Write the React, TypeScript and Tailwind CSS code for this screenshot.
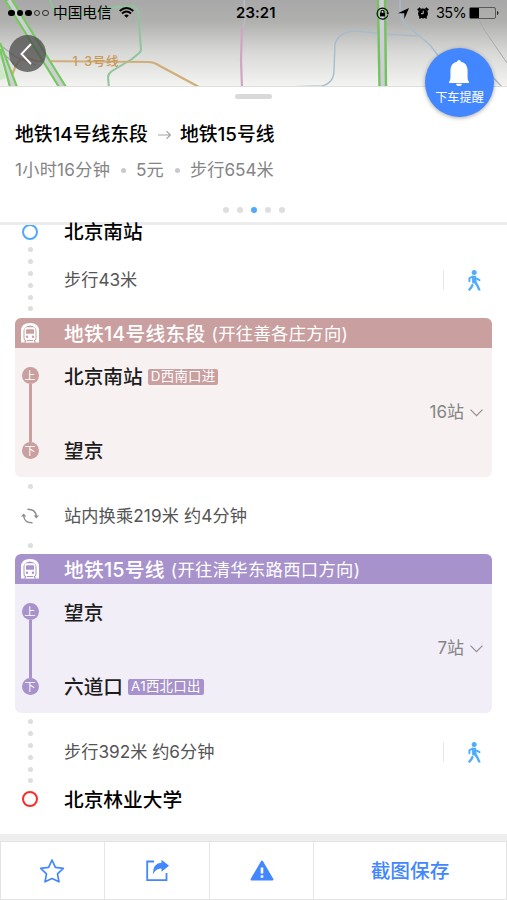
import React from 'react';
import { clsx } from 'clsx';

interface Leg {
  line: string;
  direction: string;
  from: string;
  to: string;
  entrance?: string;
  exit?: string;
  stops: number;
  theme: 'rose' | 'violet';
}

const LEGS: Leg[] = [
  { line: '地铁14号线东段', direction: '(开往善各庄方向)', from: '北京南站', to: '望京', entrance: 'D西南口进', stops: 16, theme: 'rose' },
  { line: '地铁15号线', direction: '(开往清华东路西口方向)', from: '望京', to: '六道口', exit: 'A1西北口出', stops: 7, theme: 'violet' },
];

const THEMES = {
  rose: { solid: 'bg-[#c99f9f]', soft: 'bg-[#f7f1f1]', fill: '#c99f9f' },
  violet: { solid: 'bg-[#a892cb]', soft: 'bg-[#f1eef7]', fill: '#a892cb' },
};

const MapBackdrop = () => (
  <svg className="absolute inset-0" width="507" height="87" viewBox="0 0 507 87" fill="none">
    <defs>
      <linearGradient id="shade" x1="0" y1="0" x2="0" y2="1">
        <stop offset="0" stopColor="#a8a8a8" />
        <stop offset="0.25" stopColor="#b0b0af" />
        <stop offset="0.6" stopColor="#d8d8d6" />
        <stop offset="1" stopColor="#f4f4f2" />
      </linearGradient>
    </defs>
    <rect width="507" height="87" fill="url(#shade)" />
    <path d="M0 60l6 18-6 2z" fill="#cfe8c8" />
    <path d="M0 45l16 12 20 8M0 50l14 14M6 60l9 27" stroke="#a9a4ab" strokeWidth="1.2" />
    <path d="M50 0l3 7q2 7 9 8h16q6 0 13-3l27-5 12-1q6 0 8 5l3 38q0 3-3 5l-6 5-20 12q-4 3-4 6l1 11" stroke="#8fc59a" strokeWidth="2" />
    <path d="M12 75l4-10q4-7 12-7l8 3 112 1q6 0 12 4l39 21" stroke="#cfae7a" strokeWidth="2.2" />
    <path d="M244 0l1 20-3 12" stroke="#b9bcc4" strokeWidth="1.5" />
    <path d="M242 28l-1 32 1 27" stroke="#cfa5c4" strokeWidth="2.2" />
    <path d="M284 87l38-1q12-3 12-16l1-26q4-13 22-13l28 3 33 2M400 0v12q1 9 10 16l20 17 10 13M488 72l14 15" stroke="#a6bccd" strokeWidth="1.4" />
    <path d="M470 0l13 28 24 35" stroke="#a9a9b0" strokeWidth="1" />
    <path d="M9 0l54 87M0 48l14 39" stroke="#cfced8" strokeWidth="6" />
    <path d="M5 0l54 87M12 0l54 87M0 49l10 38M0 43l17 44" stroke="#74cb5c" strokeWidth="2.2" />
    <path d="M381.500 0l2 87" stroke="#cfced8" strokeWidth="6" />
    <path d="M378 0l1.500 87M385 0l1 87" stroke="#72c25e" strokeWidth="2.400" />
    <text x="72.500" y="65.500" fontSize="12.500" fill="#c8995a" wordSpacing="2" fontWeight="500" textLength="46">1 3号线</text>
    <path d="M0 86.500h507" stroke="#dededd" />
  </svg>
);

const Wifi = () => (
  <svg width="15" height="11" viewBox="0 0 15 11" fill="none" stroke="#000" strokeWidth="1.900">
    <path d="M.7 4q6.800-6 13.600 0M3 6.500q4.500-4 9 0" />
    <path d="M7.500 10.800L5.200 8.400q2.300-1.900 4.600 0z" fill="#000" stroke="none" />
  </svg>
);

const StatusBar = () => (
  <div className="relative flex h-[26px] items-center text-black">
    <div className="flex w-[236px] items-center pl-2">
      <div className="flex gap-[2px]">
        {[true, true, true, false, false].map((on, i) => (
          <span key={i} className={clsx('h-[6.600px] w-[6.600px] rounded-full border-[0.800px] border-black/70', on && 'bg-black')} />
        ))}
      </div>
      <span className="ml-[4px] w-[66px] pt-px text-[14.700px] leading-none">中国电信</span>
      <Wifi />
    </div>
    <span className="w-[140px] text-[14.900px] font-semibold tracking-[0.100px]">23:21</span>
    <svg width="13" height="13" viewBox="0 0 13 13" fill="none" stroke="#000" strokeWidth="1.100">
      <path d="M11.800 8.300a5.500 5.500 0 1 1 .2-2.500" />
      <path d="M10.300 5.700h2.700l-1 2z" fill="#000" stroke="none" />
      <rect x="4" y="5.800" width="5" height="3.600" fill="#000" stroke="none" />
      <path d="M5 6V4.700a1.500 1.500 0 0 1 3 0V6" />
    </svg>
    <svg className="ml-[9px]" width="11" height="11" viewBox="0 0 11 11">
      <path d="M11 0L6.300 11V5.200H0z" />
    </svg>
    <svg className="ml-[8px]" width="12" height="12" viewBox="0 0 12 12">
      <circle cx="6" cy="6.500" r="4.900" />
      <path d="M.8 3.200L3.300.9M11.200 3.200L8.700.9" stroke="#000" strokeWidth="2" />
      <path d="M2.500 11.500l1-1.500M9.500 11.500L8.500 10" stroke="#000" strokeWidth="1.500" />
      <path d="M6.200 3.700v3H4" stroke="#c4c4c4" fill="none" />
    </svg>
    <span className="ml-[7px] w-[33px] whitespace-nowrap text-[14.500px] tracking-[-0.600px]">35%</span>
    <svg width="30" height="12" viewBox="0 0 30 12" fill="none">
      <rect x=".5" y=".5" width="26" height="11" rx="1.500" stroke="#444" strokeWidth=".8" />
      <rect x="1" y="1" width="9" height="10" fill="#000" />
      <path d="M28 4q1.500.5 1.500 2T28 8z" fill="#222" />
    </svg>
  </div>
);

const AlightReminder = () => (
  <button className="absolute left-[425px] top-[48px] z-10 flex h-[69px] w-[69px] flex-col items-center rounded-full bg-[#4287ff] pt-[12px] shadow-[0_1px_4px_rgba(0,0,0,0.350)]">
    <svg className="mr-px" width="20" height="26" viewBox="0 0 21 26" preserveAspectRatio="none" fill="#fff">
      <path d="M10.500 0a2 2 0 0 1 2 1.700Q19.300 3.300 19.500 10v8q.1 2.500 1.500 4v1H0v-1q1.400-1.500 1.500-4v-8Q1.700 3.300 8.500 1.700A2 2 0 0 1 10.500 0zM7.500 23.800h6a3 2.200 0 0 1-6 0z" />
    </svg>
    <span className="mt-[5px] text-[12.200px] leading-[14px] text-white">下车提醒</span>
  </button>
);

const Summary = () => (
  <section className="relative flex h-[138px] flex-col border-b-[3px] border-[#ececec] bg-white">
    <div className="mx-auto mt-[7px] h-[5px] w-[37px] rounded-full bg-[#d9d9d9]" />
    <h1 className="mt-[25px] flex h-[22px] items-center pl-[15px] text-[18.800px] font-medium text-black">
      <span className="w-[143px] whitespace-nowrap">地铁14号线东段</span>
      <svg width="13" height="10" viewBox="0 0 13 10" fill="none" stroke="#a3a3a3" strokeWidth="1.200">
        <path d="M0 5h12M8.500 1.200L12.300 5 8.500 8.800" />
      </svg>
      <span className="ml-[9px] whitespace-nowrap">地铁15号线</span>
    </h1>
    <div className="mt-[13px] flex h-[22px] items-center pl-[15px] text-[17.200px] text-[#858585]">
      <span className="w-[106px] whitespace-nowrap tracking-[0.250px]">1小时16分钟</span>
      <i className="h-[5px] w-[5px] rounded-full bg-[#c9c9c9]" />
      <span className="ml-[10px] w-[39px] whitespace-nowrap">5元</span>
      <i className="h-[5px] w-[5px] rounded-full bg-[#c9c9c9]" />
      <span className="ml-[10px] whitespace-nowrap">步行654米</span>
    </div>
    <div className="mt-[26px] flex justify-center gap-2">
      {[0, 1, 2, 3, 4].map(i => (
        <i key={i} className={clsx('h-[6px] w-[6px] rounded-full', i === 2 ? 'bg-[#50a9fb]' : 'bg-[#dedede]')} />
      ))}
    </div>
  </section>
);

const Dots = ({ count }: { count: number }) => (
  <div className="flex flex-col items-center gap-[6.900px]">
    {Array.from({ length: count }, (_, i) => (
      <i key={i} className="h-[5px] w-[5px] rounded-full bg-[#dddddd]" />
    ))}
  </div>
);

const WalkRow = ({ text }: { text: string }) => (
  <div className="flex h-[22px] items-center">
    <span className="flex-1 text-[17.200px] text-[#555]">{text}</span>
    <span className="mr-[24px] h-[20px] w-px bg-[#e8e8e8]" />
    <svg className="mr-[26px]" width="13" height="21" viewBox="0 0 13 21" fill="none" stroke="#50adfa" strokeLinecap="round" strokeLinejoin="round">
      <circle cx="6.200" cy="2.600" r="2.500" fill="#50adfa" stroke="none" />
      <path d="M4.800 6.500h2.600l.5 6.200H5z" fill="#50adfa" strokeWidth="1.700" />
      <path d="M4.500 6.500L1.400 8.300v3M8.800 8.700l2.700 1.400" strokeWidth="2" />
      <path d="M7.300 12.500l1.900 2.700 2 4.300M4.300 15.200L3.500 17l-2 2.500" strokeWidth="2.400" />
    </svg>
  </div>
);

const TrainIcon = ({ cut }: { cut: string }) => (
  <svg width="18" height="20" viewBox="0 0 18 20">
    <path d="M0 19.500V8Q0 0 9 0t9 8v11.500z" fill="#fff" />
    <path d="M3.600 5Q5.500 2.500 9 2.500t5.400 2.500q1.100 1 1.100 3v7q0 2-1.500 2.800l1 1.700H3l1-1.700Q2.500 17 2.500 15V8q0-2 1.100-3z" fill={cut} />
    <path d="M5.500 4.200h7q2 0 2 2.300v8.500q0 2.300-2 2.300l1.100 2.200H4.400l1.100-2.200q-2 0-2-2.300V6.500q0-2.300 2-2.300z" fill="#fff" />
    <path d="M5.800 6.300h6.400q.8 0 .8.800v3.700H5V7.100q0-.8.800-.8z" fill={cut} />
    <circle cx="6" cy="13.800" r="1.200" fill={cut} />
    <circle cx="12" cy="13.800" r="1.200" fill={cut} />
    <path d="M6 17.500h6" stroke={cut} strokeWidth="1" />
  </svg>
);

const Tag = ({ children, tone }: { children: React.ReactNode; tone: string }) => (
  <span className={clsx('ml-[5px] flex h-[16px] items-center whitespace-nowrap rounded-[2px] px-[3px] text-[13.400px] font-normal leading-none tracking-[0.300px] text-white', tone)}>
    {children}
  </span>
);

const StopBadge = ({ label, tone }: { label: string; tone: string }) => (
  <span className={clsx('flex h-[17px] w-[17px] items-center justify-center rounded-full pt-px text-[11px] leading-none text-white', tone)}>
    {label}
  </span>
);

const LegCard = ({ leg }: { leg: Leg }) => {
  const theme = THEMES[leg.theme];
  return (
    <section className="mx-[15px] h-[159px] overflow-hidden rounded-[6px]">
      <header className={clsx('flex h-[30px] items-center pl-[6px] text-white', theme.solid)}>
        <TrainIcon cut={theme.fill} />
        <span className="ml-[25px] whitespace-nowrap pt-[3px] text-[19.800px] font-medium tracking-[0.200px]">{leg.line}</span>
        <span className="ml-[6px] whitespace-nowrap pt-px text-[17.300px] tracking-[0.350px]">{leg.direction}</span>
      </header>
      <div className={clsx('flex h-[129px]', theme.soft)}>
        <div className="flex w-[30px] flex-col items-center pt-[19px]">
          <StopBadge label="上" tone={theme.solid} />
          <span className={clsx('h-[58px] w-[3px]', theme.solid)} />
          <StopBadge label="下" tone={theme.solid} />
        </div>
        <div className="flex flex-1 flex-col pl-[19px] pt-[18px] text-[19.700px] font-medium text-[#1c1c1c]">
          <div className="flex h-[22px] items-center">
            <span className="pt-[2px]">{leg.from}</span>
            {leg.entrance && <Tag tone={theme.solid}>{leg.entrance}</Tag>}
          </div>
          <div className="mt-[14px] flex h-[22px] items-center justify-end pr-[9px] text-[17px] font-normal text-[#858585]">
            <span>{leg.stops}站</span>
            <svg className="ml-[6px]" width="13" height="8" viewBox="0 0 13 8" fill="none" stroke="#8d8d8d" strokeWidth="1.100">
              <path d="M.5.700l6 6 6-6" />
            </svg>
          </div>
          <div className="mt-[16px] flex h-[22px] items-center">
            <span className="pt-px">{leg.to}</span>
            {leg.exit && <Tag tone={theme.solid}>{leg.exit}</Tag>}
          </div>
        </div>
      </div>
    </section>
  );
};

// two quarter arcs chasing each other
const TransferIcon = () => (
  <svg width="18" height="16" viewBox="0 0 18 16" fill="none" stroke="#8c8c8c" strokeWidth="1.400">
    <path d="M6.500 1.200Q14.500 1 15.300 8M11.500 14.800Q3.500 15 2.700 8" />
    <path d="M0 8.600l2.700-3 2.600 3zM12.700 7.400l2.600 3 2.700-3z" fill="#8c8c8c" stroke="none" />
  </svg>
);

const Toolbar = () => (
  <footer className="flex h-[66px] border-t-[7px] border-[#eeeeee] bg-white">
    <div className="flex flex-1 divide-x divide-[#e6e6e6] border border-[#e3e3e3]">
      <button className="flex w-[104px] items-center justify-center pr-px">
        <svg width="26" height="26" viewBox="0 0 26 26" fill="none" stroke="#4287ff" strokeWidth="1.700" strokeLinejoin="round">
          <path d="M13 2l3.400 7.300 7.900 1-5.800 5.500 1.500 8L13 20.600 6 23.800l1.500-8L1.700 10.300l7.900-1z" />
        </svg>
      </button>
      <button className="flex w-[105px] items-center justify-center">
        <svg width="23" height="23" viewBox="0 0 23 23" fill="none" stroke="#4287ff" strokeWidth="1.800">
          <path d="M8 2.500H1.200v18.600H20.500V14" />
          <path d="M6.800 15.500Q7 4 15.500 3.800V.8l7.500 6-7.500 6V9.500Q10 9 6.800 15.500z" fill="#4287ff" stroke="none" />
        </svg>
      </button>
      <button className="flex w-[104px] items-center justify-center">
        <svg width="24" height="21" viewBox="0 0 24 21">
          <path d="M12 1.500L22.500 19.500h-21z" fill="#4287ff" stroke="#4287ff" strokeWidth="2" strokeLinejoin="round" />
          <path d="M12 7.500v6M12 15.300v2.500" stroke="#fff" strokeWidth="2.600" />
        </svg>
      </button>
      <button className="flex flex-1 items-center justify-center pt-[2px] text-[19.700px] font-medium text-[#4287ff]">截图保存</button>
    </div>
  </footer>
);

export default function App() {
  return (
    <main className="relative flex h-[900px] w-[507px] flex-col overflow-hidden bg-white font-['Inter','Noto_Sans_CJK_SC',sans-serif]">
      <div className="relative h-[87px]">
        <MapBackdrop />
        <StatusBar />
        <button className="relative ml-[9px] mt-[9px] flex h-[37px] w-[37px] items-center justify-center rounded-full bg-[#4a4a4a]/75">
          <svg className="mr-[3px]" width="12" height="22" viewBox="0 0 12 22" fill="none" stroke="#fff" strokeWidth="1.900">
            <path d="M11 1L1.500 11 11 21" />
          </svg>
        </button>
      </div>
      <Summary />
      <AlightReminder />

      <div className="flex h-[93px] pl-[15px]">
        <div className="flex w-[30px] flex-col items-center">
          <span className="mb-[7px] mt-[-1px] h-[16px] w-[16px] shrink-0 rounded-full border-[2.500px] border-[#50a9fb]" />
          <Dots count={6} />
        </div>
        <div className="flex-1 pl-[19px]">
          <div className="relative mt-[-4px] flex h-[22px] items-center pt-px text-[19.700px] font-medium text-black">北京南站</div>
          <div className="mt-[26px]"><WalkRow text="步行43米" /></div>
        </div>
      </div>

      <LegCard leg={LEGS[0]} />

      <div className="flex h-[77px] items-center pl-[15px]">
        <div className="flex h-full w-[30px] flex-col items-center justify-between pb-[6px] pt-[7px]">
          <Dots count={1} />
          <TransferIcon />
          <Dots count={1} />
        </div>
        <span className="pl-[19px] text-[17.200px] tracking-[0.120px] text-[#555]">站内换乘219米 约4分钟</span>
      </div>

      <LegCard leg={LEGS[1]} />

      <div className="flex h-[121px] pl-[15px]">
        <div className="flex w-[30px] flex-col items-center pt-[6px]">
          <Dots count={6} />
          <span className="mt-[8px] h-[16px] w-[16px] shrink-0 rounded-full border-[2.500px] border-[#f62f2a]" />
        </div>
        <div className="flex-1 pl-[19px] pt-[28px]">
          <WalkRow text="步行392米 约6分钟" />
          <div className="mt-[26px] flex h-[22px] items-center pt-[2px] text-[19.700px] font-medium text-black">北京林业大学</div>
        </div>
      </div>

      <Toolbar />
    </main>
  );
}
